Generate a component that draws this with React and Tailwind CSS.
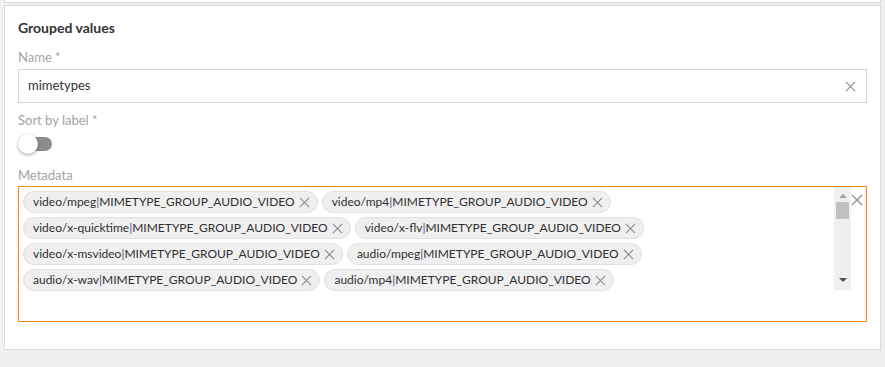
import React from "react";

const chips = [
  "video/mpeg",
  "video/mp4",
  "video/x-quicktime",
  "video/x-flv",
  "video/x-msvideo",
  "audio/mpeg",
  "audio/x-wav",
  "audio/mp4",
];

function XIcon({ className = "" }) {
  return (
    <svg viewBox="0 0 12 12" className={className} fill="none" stroke="currentColor" strokeWidth="1.2">
      <path d="M1 1 L11 11 M11 1 L1 11" />
    </svg>
  );
}

function Chip({ label }) {
  return (
    <div className="flex items-center h-[22px] rounded-full border border-[#e0e0e0] bg-[#efefef] pl-[9px] pr-[7px] text-[12px] text-[#2f2f2f]">
      <span>
        {label}
        <span className="text-[#4a4a8a]">|</span>MIMETYPE_GROUP_AUDIO_VIDEO
      </span>
      <XIcon className="w-[11px] h-[11px] ml-[4px] text-[#8a8a8a]" />
    </div>
  );
}

export default function App() {
  return (
    <div
      className="w-[885px] h-[367px] bg-[#f0f0f0] overflow-hidden"
      style={{ fontFamily: "Lato, 'Open Sans', sans-serif" }}
    >
      <div className="ml-[4px] mr-[4px] h-[3px] bg-white border-x border-b border-[#dcdcdc]" />
      <div className="ml-[4px] mt-[2px] w-[877px] h-[345px] bg-white border border-[#dcdcdc] px-[13px] pt-[12px]">
        <div className="h-[20px] leading-[20px] text-[14px] font-bold text-[#333]">Grouped values</div>
        <div className="mt-[10px] h-[18px] leading-[18px] text-[13px] text-[#a3a3a3]">Name *</div>
        <div className="mt-[3px] h-[34px] border border-[#d6d6d6] flex items-center pl-[9px] pr-[10px] text-[13px] text-[#333]">
          <span className="flex-1">mimetypes</span>
          <XIcon className="w-[11px] h-[11px] text-[#8a8a8a]" />
        </div>
        <div className="mt-[8px] h-[18px] leading-[18px] text-[13px] text-[#a3a3a3]">Sort by label *</div>
        <div className="mt-[5px] h-[20px] relative w-[34px]">
          <div className="absolute left-[4px] top-[3px] w-[30px] h-[14px] rounded-full bg-[#8c8c8c]" />
          <div className="absolute left-0 top-0 w-[20px] h-[20px] rounded-full bg-white shadow-[0_1px_3px_rgba(0,0,0,0.4)]" />
        </div>
        <div className="mt-[12px] h-[18px] leading-[18px] text-[13px] text-[#a3a3a3]">Metadata</div>
        <div className="mt-[2px] h-[136px] border border-[#f5890e] flex items-start">
          <div className="flex-1 h-[104px] overflow-hidden pl-[4px] pt-[4px] flex flex-wrap content-start gap-[4px]">
            {chips.map((c) => (
              <Chip key={c} label={c} />
            ))}
          </div>
          <div className="w-[17px] h-[103px] bg-[#f0f0f0] flex flex-col items-center">
            <div className="mt-[7px] w-0 h-0 border-x-[4px] border-x-transparent border-b-[4px] border-b-[#a3a3a3]" />
            <div className="mt-[4px] w-[13px] h-[17px] bg-[#c1c1c1]" />
            <div className="flex-1" />
            <div className="mb-[8px] w-0 h-0 border-x-[4px] border-x-transparent border-t-[4px] border-t-[#505050]" />
          </div>
          <div className="w-[15px] pt-[7px] pl-[0px]">
            <XIcon className="w-[12px] h-[12px] text-[#8a8a8a]" />
          </div>
        </div>
      </div>
    </div>
  );
}
